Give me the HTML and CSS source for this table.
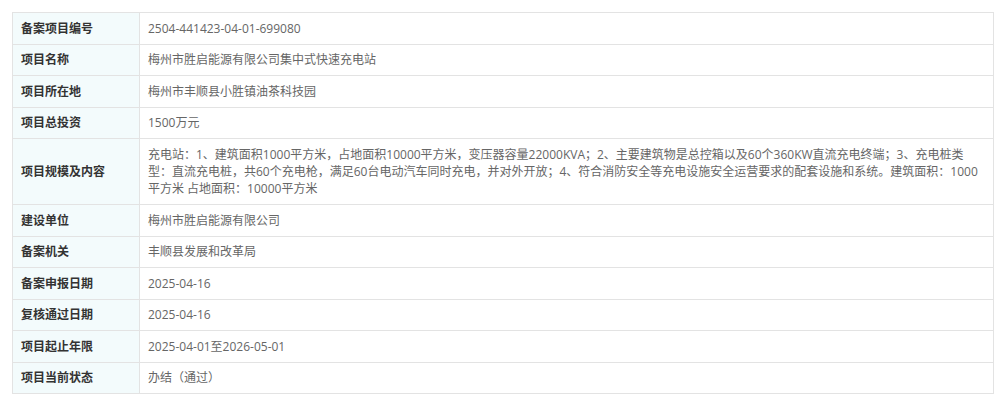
FILE: index.html
```html
<!DOCTYPE html>
<html lang="zh-CN">
<head>
  <meta charset="UTF-8" />
  <title>备案项目信息</title>
  <link rel="stylesheet" href="styles.css">
</head>
<body>
  <table class="info-table">
    <tr>
      <th>备案项目编号</th>
      <td>2504-441423-04-01-699080</td>
    </tr>
    <tr>
      <th>项目名称</th>
      <td>梅州市胜启能源有限公司集中式快速充电站</td>
    </tr>
    <tr>
      <th>项目所在地</th>
      <td>梅州市丰顺县小胜镇油茶科技园</td>
    </tr>
    <tr>
      <th>项目总投资</th>
      <td>1500万元</td>
    </tr>
    <tr class="tall">
      <th>项目规模及内容</th>
      <td>充电站：1、建筑面积1000平方米，占地面积10000平方米，变压器容量22000KVA；2、主要建筑物是总控箱以及60个360KW直流充电终端；3、充电桩类型：直流充电桩，共60个充电枪，满足60台电动汽车同时充电，并对外开放；4、符合消防安全等充电设施安全运营要求的配套设施和系统。建筑面积：1000平方米 占地面积：10000平方米</td>
    </tr>
    <tr>
      <th>建设单位</th>
      <td>梅州市胜启能源有限公司</td>
    </tr>
    <tr>
      <th>备案机关</th>
      <td>丰顺县发展和改革局</td>
    </tr>
    <tr>
      <th>备案申报日期</th>
      <td>2025-04-16</td>
    </tr>
    <tr>
      <th>复核通过日期</th>
      <td>2025-04-16</td>
    </tr>
    <tr>
      <th>项目起止年限</th>
      <td>2025-04-01至2026-05-01</td>
    </tr>
    <tr>
      <th>项目当前状态</th>
      <td>办结（通过）</td>
    </tr>
  </table>
</body>
</html>
```

FILE: styles.css
```css
body {
  margin: 0;
  padding: 12px 6px 12px 12px;
  background: #fff;
  font-family: "Open Sans", "Noto Sans CJK SC", sans-serif;
  font-size: 12px;
}
.info-table {
  width: 982px;
  border-collapse: collapse;
  table-layout: fixed;
}
.info-table th,
.info-table td {
  border: 1px solid #e3e3e3;
  height: 30.5px;
  padding: 0 8px;
  line-height: 17px;
  vertical-align: middle;
  text-align: left;
}
.info-table th {
  width: 110px;
  background: #f3fbfc;
  color: #333;
  font-weight: bold;
}
.info-table td {
  color: #666;
}
.info-table .tall td {
  height: 65px;
}
```
